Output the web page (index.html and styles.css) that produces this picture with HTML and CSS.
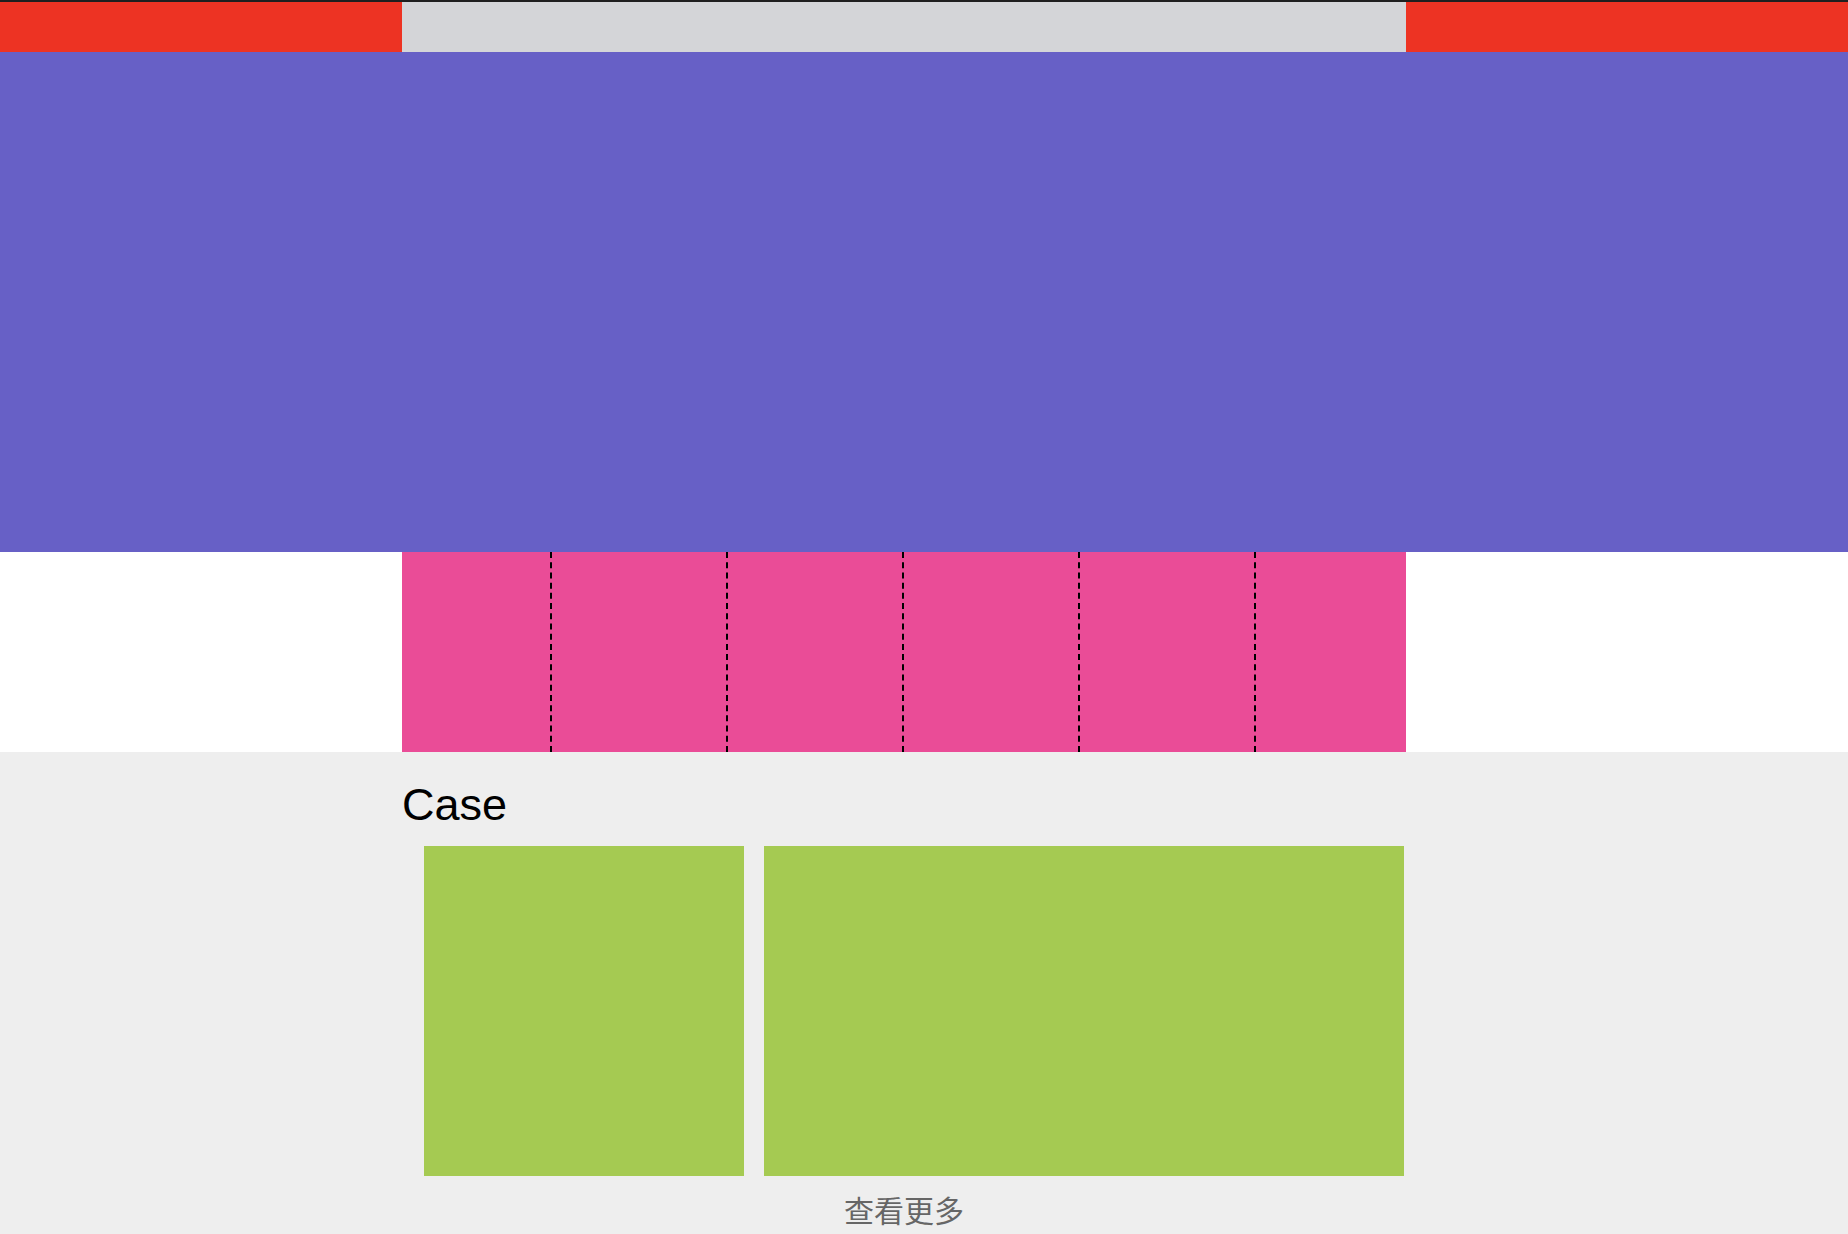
FILE: index.html
```html
<!DOCTYPE html>
<html lang="zh-CN">
<head>
    <meta charset="UTF-8">
    <meta name="viewport" content="width=device-width, initial-scale=1.0">
    <title>Case</title>
    <link rel="stylesheet" href="styles.css">
</head>
<body>
    <div class="topline"></div>

    <header class="topbar">
        <div class="wrap topbar-center"></div>
    </header>

    <section class="banner"></section>

    <section class="strip">
        <div class="wrap strip-inner">
            <div class="cell"></div>
            <div class="cell"></div>
            <div class="cell"></div>
            <div class="cell"></div>
        </div>
    </section>

    <section class="cases">
        <div class="wrap">
            <h2 class="cases-title">Case</h2>
            <div class="case-row">
                <div class="case case-small"></div>
                <div class="case case-large"></div>
            </div>
            <a class="more" href="#">查看更多</a>
        </div>
    </section>
</body>
</html>
```

FILE: styles.css
```css
/* 全局 */
body {
    margin: 0;
    padding: 0;
    font-family: "Liberation Sans", "Noto Sans CJK SC", sans-serif;
    background: #fff;
}

.wrap {
    width: 1004px;
    margin-left: 402px;
}

.topline {
    height: 2px;
    background: #1f1f1f;
}

/* 顶部栏 */
.topbar {
    height: 50px;
    background: #ed3323;
}

.topbar-center {
    height: 50px;
    background: #d4d5d8;
}

/* banner */
.banner {
    height: 500px;
    background: #6760c6;
}

/* 粉色条 */
.strip-inner {
    box-sizing: border-box;
    height: 200px;
    padding-left: 148px;
    background: #ea4c97;
    display: flex;
}

.cell {
    width: 174px;
    border-left: 2px dashed #000;
}

.cell:last-child {
    border-right: 2px dashed #000;
}

/* Case */
.cases {
    background: #eee;
    padding-top: 27px;
    padding-bottom: 40px;
}

.cases-title {
    margin: 0;
    font-size: 45px;
    font-weight: normal;
    line-height: 52px;
    color: #000;
}

.case-row {
    display: flex;
    gap: 20px;
    margin-top: 15px;
    padding-left: 22px;
}

.case {
    height: 330px;
    background: #a5ca52;
}

.case-small {
    width: 320px;
}

.case-large {
    width: 640px;
}

.more {
    display: block;
    margin-top: 13px;
    text-align: center;
    font-family: "Noto Sans CJK SC", sans-serif;
    font-size: 30px;
    line-height: 40px;
    color: #666;
    text-decoration: none;
}
```
